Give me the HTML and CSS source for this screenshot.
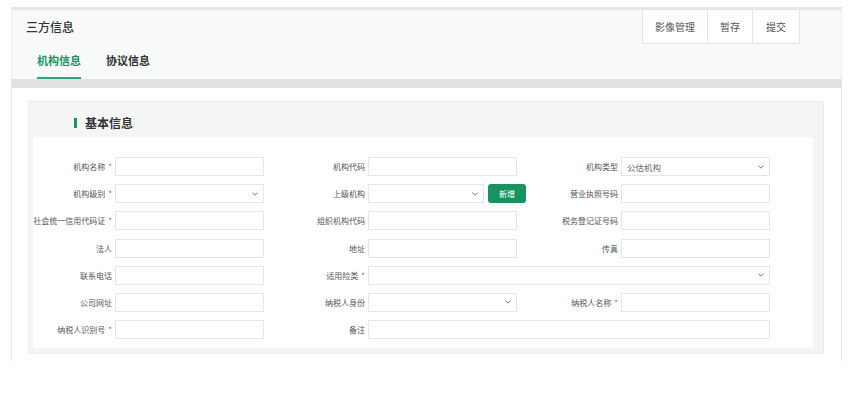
FILE: index.html
```html
<!DOCTYPE html>
<html lang="zh-CN">
<head>
<meta charset="utf-8">
<title>三方信息</title>
<link rel="stylesheet" href="styles.css">
</head>
<body>
<div class="page">
  <div class="header">
    <div class="header-top">
      <h1 class="page-title">三方信息</h1>
      <div class="actions">
        <button class="act">影像管理</button>
        <button class="act">暂存</button>
        <button class="act">提交</button>
      </div>
    </div>
    <div class="tabs">
      <a class="tab active">机构信息</a>
      <a class="tab">协议信息</a>
    </div>
  </div>
  <div class="band"></div>
  <div class="content">
    <div class="card">
      <div class="card-title"><span class="bar"></span>基本信息</div>
      <div class="form">
        <label class="lbl">机构名称<i class="req">*</i></label>
        <div class="field"><div class="input"></div></div>
        <label class="lbl">机构代码</label>
        <div class="field"><div class="input"></div></div>
        <label class="lbl">机构类型</label>
        <div class="field"><div class="input select"><span class="val">公估机构</span><svg class="chev" viewBox="0 0 6 4" width="6" height="4"><path d="M0.5 0.6 L3 3.2 L5.5 0.6" fill="none" stroke="#666" stroke-width="0.9"/></svg></div></div>

        <label class="lbl">机构级别<i class="req">*</i></label>
        <div class="field"><div class="input select"><span class="val"></span><svg class="chev" viewBox="0 0 6 4" width="6" height="4"><path d="M0.5 0.6 L3 3.2 L5.5 0.6" fill="none" stroke="#666" stroke-width="0.9"/></svg></div></div>
        <label class="lbl">上级机构</label>
        <div class="field with-btn"><div class="input select short"><span class="val"></span><svg class="chev" viewBox="0 0 6 4" width="6" height="4"><path d="M0.5 0.6 L3 3.2 L5.5 0.6" fill="none" stroke="#666" stroke-width="0.9"/></svg></div><button class="btn-add">新增</button></div>
        <label class="lbl">营业执照号码</label>
        <div class="field"><div class="input"></div></div>

        <label class="lbl">社会统一信用代码证<i class="req">*</i></label>
        <div class="field"><div class="input"></div></div>
        <label class="lbl">组织机构代码</label>
        <div class="field"><div class="input"></div></div>
        <label class="lbl">税务登记证号码</label>
        <div class="field"><div class="input"></div></div>

        <label class="lbl">法人</label>
        <div class="field"><div class="input"></div></div>
        <label class="lbl">地址</label>
        <div class="field"><div class="input"></div></div>
        <label class="lbl">传真</label>
        <div class="field"><div class="input"></div></div>

        <label class="lbl">联系电话</label>
        <div class="field"><div class="input"></div></div>
        <label class="lbl">适用险类<i class="req">*</i></label>
        <div class="field span3"><div class="input select"><span class="val"></span><svg class="chev" viewBox="0 0 6 4" width="6" height="4"><path d="M0.5 0.6 L3 3.2 L5.5 0.6" fill="none" stroke="#666" stroke-width="0.9"/></svg></div></div>

        <label class="lbl">公司网址</label>
        <div class="field"><div class="input"></div></div>
        <label class="lbl">纳税人身份</label>
        <div class="field"><div class="input select"><span class="val"></span><svg class="chev" viewBox="0 0 6 4" width="6" height="4"><path d="M0.5 0.6 L3 3.2 L5.5 0.6" fill="none" stroke="#666" stroke-width="0.9"/></svg></div></div>
        <label class="lbl">纳税人名称<i class="req">*</i></label>
        <div class="field"><div class="input"></div></div>

        <label class="lbl">纳税人识别号<i class="req">*</i></label>
        <div class="field"><div class="input"></div></div>
        <label class="lbl">备注</label>
        <div class="field span3"><div class="input"></div></div>
      </div>
    </div>
  </div>
</div>
</body>
</html>
```
FILE: styles.css
```css
* { box-sizing: border-box; }
html, body { margin: 0; padding: 0; background: #fff; }
body {
  font-family: "Noto Sans CJK SC", "Noto Sans", sans-serif;
  color: #333;
}
.page {
  margin: 7px 0 0 11px;
  width: 831px;
}
.header {
  border-top: 3px solid #e4e5e5;
  background: #f8f9f9;
  border-left: 1px solid #eceeee;
  border-right: 1px solid #eceeee;
}
.header-top {
  height: 34px;
  display: flex;
  justify-content: space-between;
  align-items: flex-start;
}
.page-title {
  margin: 0;
  padding-left: 14px;
  font-size: 12px;
  font-weight: 500;
  line-height: 34px;
  color: #333;
}
.actions {
  display: flex;
  margin-right: 41px;
  height: 34px;
  background: #fff;
  border: 1px solid #e4e6e6;
  border-top: none;
}
.act {
  font-family: inherit;
  font-size: 10px;
  color: #555;
  background: #fff;
  border: none;
  border-left: 1px solid #e4e6e6;
  padding: 0 12px;
  height: 33px;
  line-height: 33px;
  cursor: pointer;
}
.act:first-child { border-left: none; }
.act:last-child { padding: 0 13px 0 13px; }
.tabs {
  display: flex;
  gap: 25px;
  padding-left: 25px;
  height: 35px;
}
.tab {
  font-size: 11px;
  font-weight: 700;
  color: #333;
  line-height: 33px;
  height: 35px;
  border-bottom: 2px solid transparent;
}
.tab.active {
  color: #1b9466;
  border-bottom-color: #2aa87a;
}
.band {
  height: 9px;
  background: #e1e2e2;
}
.content {
  background: #fff;
  border-left: 1px solid #e6e8e8;
  border-right: 1px solid #e6e8e8;
  padding: 13px 17px 7px 16px;
}
.card {
  background: #f4f6f6;
  border: 1px solid #eaecec;
  padding: 0 10px 5px 4px;
}
.card-title {
  height: 35px;
  padding: 12px 0 0 41px;
  font-size: 12px;
  font-weight: 700;
  line-height: 18px;
  color: #333;
  display: flex;
  align-items: flex-start;
}
.bar {
  display: inline-block;
  width: 3px;
  height: 10px;
  background: #1b9466;
  margin: 4px 8px 0 0;
}
.form {
  background: #fff;
  padding: 20px 0 9px 0;
  display: grid;
  grid-template-columns: 82px 149px 104px 149px 104px 149px;
  grid-auto-rows: 19px;
  row-gap: 8.2px;
}
.lbl {
  font-size: 8px;
  color: #555;
  text-align: right;
  padding-right: 3px;
  line-height: 19px;
  white-space: nowrap;
}
.req {
  font-style: normal;
  color: #e0454b;
  margin-left: 3px;
}
.field { display: flex; }
.span3 { grid-column: span 3; }
.input {
  flex: 1;
  height: 19px;
  border: 1px solid #e3e6e6;
  background: #fff;
}
.select {
  display: flex;
  align-items: center;
  justify-content: space-between;
  padding: 0 5px 0 5px;
}
.val {
  font-size: 8.5px;
  color: #666;
}
.chev { display: block; }
.with-btn { gap: 4px; overflow: visible; }
.short { flex: 0 0 116px; }
.btn-add {
  flex: 0 0 38px;
  height: 19px;
  border: none;
  border-radius: 3px;
  background: #17935f;
  color: #fff;
  font-family: inherit;
  font-size: 8px;
  padding: 0;
}
```
